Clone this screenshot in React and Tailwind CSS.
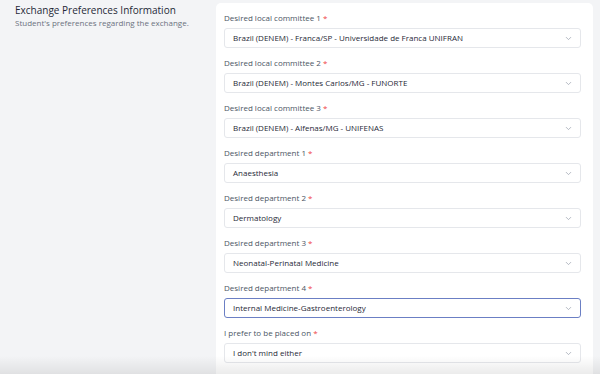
import { ChevronDown } from 'lucide-react';

const fields = [
  { label: 'Desired local committee 1', value: 'Brazil (DENEM) - Franca/SP - Universidade de Franca UNIFRAN' },
  { label: 'Desired local committee 2', value: 'Brazil (DENEM) - Montes Carlos/MG - FUNORTE' },
  { label: 'Desired local committee 3', value: 'Brazil (DENEM) - Alfenas/MG - UNIFENAS' },
  { label: 'Desired department 1', value: 'Anaesthesia' },
  { label: 'Desired department 2', value: 'Dermatology' },
  { label: 'Desired department 3', value: 'Neonatal-Perinatal Medicine' },
  { label: 'Desired department 4', value: 'Internal Medicine-Gastroenterology', focused: true },
  { label: 'I prefer to be placed on', value: "I don't mind either" },
];

const SelectField = ({ label, value, focused }) => (
  <div className="flex flex-col">
    <label className="h-[10px] mb-[5px] text-[8px] leading-[10px] text-[#4b5563]">
      {label} <span className="text-[#ef4444]">*</span>
    </label>
    <div
      className={`h-[20px] flex items-center justify-between pl-[8px] pr-[7px] rounded-[3px] bg-white ${
        focused ? 'border-[1.5px] border-[#6b7fc4]' : 'border border-[#e5e7eb]'
      }`}
    >
      <span className="text-[8px] text-[#1f2937]">{value}</span>
      <ChevronDown className="w-[9px] h-[9px] text-[#9ca3af]" strokeWidth={2} />
    </div>
  </div>
);

export default function App() {
  return (
    <div
      className="relative w-[600px] h-[374px] overflow-hidden bg-[#f3f4f6] flex"
      style={{ fontFamily: '"Open Sans", "Liberation Sans", sans-serif' }}
    >
      <div className="w-[216px] shrink-0 pl-[15px] pt-[3px]">
        <h2 className="text-[10px] leading-[14px] text-[#1f2937]">Exchange Preferences Information</h2>
        <p className="text-[8px] leading-[11px] text-[#6b7280]">Student's preferences regarding the exchange.</p>
      </div>
      <div className="w-[377px] mt-[3px] bg-white rounded-t-[5px] pl-[8px] pr-[12px] pt-[10px]">
        <div className="flex flex-col gap-[10px]">
          {fields.map((f) => (
            <SelectField key={f.label} {...f} />
          ))}
        </div>
      </div>
      <div className="absolute left-0 right-0 bottom-0 h-[18px] bg-gradient-to-b from-transparent to-[#00000014] pointer-events-none" />
    </div>
  );
}
